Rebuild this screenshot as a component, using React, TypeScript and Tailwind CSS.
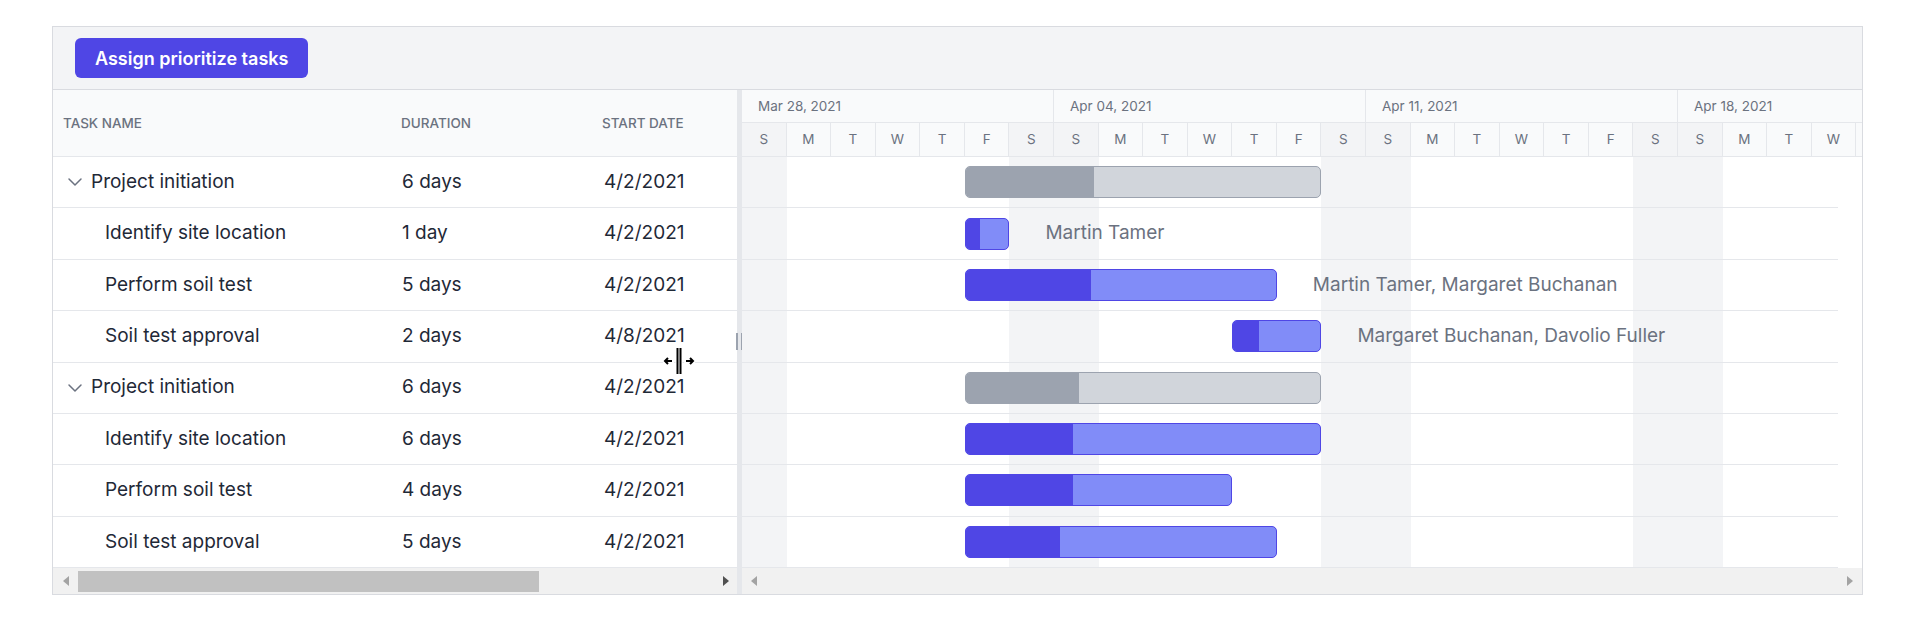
import type { FC, ReactElement } from "react";
import { ChevronDown } from "lucide-react";

const DAY_W = 312 / 7;

interface Task {
  name: string;
  duration: string;
  start: string;
  parent?: boolean;
  startDay: number;
  days: number;
  progress: number;
  label?: string;
}

const tasks: Task[] = [
  { name: "Project initiation", duration: "6 days", start: "4/2/2021", parent: true, startDay: 5, days: 8, progress: 128 },
  { name: "Identify site location", duration: "1 day", start: "4/2/2021", startDay: 5, days: 1, progress: 14, label: "Martin Tamer" },
  { name: "Perform soil test", duration: "5 days", start: "4/2/2021", startDay: 5, days: 7, progress: 125, label: "Martin Tamer, Margaret Buchanan" },
  { name: "Soil test approval", duration: "2 days", start: "4/8/2021", startDay: 11, days: 2, progress: 26, label: "Margaret Buchanan, Davolio Fuller" },
  { name: "Project initiation", duration: "6 days", start: "4/2/2021", parent: true, startDay: 5, days: 8, progress: 113 },
  { name: "Identify site location", duration: "6 days", start: "4/2/2021", startDay: 5, days: 8, progress: 107 },
  { name: "Perform soil test", duration: "4 days", start: "4/2/2021", startDay: 5, days: 6, progress: 107 },
  { name: "Soil test approval", duration: "5 days", start: "4/2/2021", startDay: 5, days: 7, progress: 94 },
];

const weeks = ["Mar 28, 2021", "Apr 04, 2021", "Apr 11, 2021", "Apr 18, 2021"];
const dayLetters = ["S", "M", "T", "W", "T", "F", "S"];

const Arrow: FC<{ dir: "left" | "right"; color: string }> = ({ dir, color }): ReactElement => (
  <svg width="6" height="10" viewBox="0 0 6 10">
    {dir === "left" ? <path d="M6 0 L0 5 L6 10 Z" fill={color} /> : <path d="M0 0 L6 5 L0 10 Z" fill={color} />}
  </svg>
);

const ResizeCursor: FC = (): ReactElement => (
  <svg width="34" height="30" viewBox="0 0 34 30" className="absolute left-[662px] top-[346px] pointer-events-none">
    <g fill="none" stroke="#fff" strokeWidth="4" strokeLinecap="square">
      <path d="M10 15 H3 M6 12 L3 15 L6 18" />
      <path d="M24 15 H31 M28 12 L31 15 L28 18" />
      <path d="M15.5 2 V28 M18.5 2 V28" />
    </g>
    <g fill="none" stroke="#000" strokeWidth="2">
      <path d="M10 15 H3 M6 12 L3 15 L6 18" />
      <path d="M24 15 H31 M28 12 L31 15 L28 18" />
      <path d="M15.5 2 V28 M18.5 2 V28" />
    </g>
  </svg>
);

const App: FC = (): ReactElement => {
  return (
    <div className="relative min-h-screen bg-white pt-[26px] pl-[52px] font-['Inter',sans-serif]">
      <div className="w-[1811px] h-[569px] border border-[#d9dbe0] flex flex-col">
        {/* toolbar */}
        <div className="h-[63px] shrink-0 bg-[#f3f4f6] border-b border-[#d9dbe0] pl-[22px] flex items-center">
          <button className="h-10 px-[20px] rounded-md bg-[#4f46e5] text-white text-[18px] font-semibold">
            Assign prioritize tasks
          </button>
        </div>

        <div className="flex flex-1 min-h-0">
          {/* grid */}
          <div className="w-[684px] shrink-0 flex flex-col">
            <div className="h-[67px] shrink-0 bg-[#f9fafb] border-b border-[#e5e7eb] flex items-center text-[13.5px] font-medium text-[#6b7280] uppercase">
              <div className="w-[338px] pl-[10px]">Task Name</div>
              <div className="w-[201px] pl-[10px]">Duration</div>
              <div className="pl-[10px]">Start Date</div>
            </div>
            {tasks.map((t, i) => (
              <div key={i} className="h-[51.375px] shrink-0 border-b border-[#e5e7eb] flex items-center text-[19px] text-[#1f2937]">
                <div className="w-[338px] flex items-center">
                  {t.parent ? (
                    <div className="flex items-center pl-[10px]">
                      <ChevronDown size={24} strokeWidth={1.5} className="text-[#6b7280]" />
                      <span className="ml-[4px]">{t.name}</span>
                    </div>
                  ) : (
                    <span className="pl-[52px]">{t.name}</span>
                  )}
                </div>
                <div className="w-[201px] pl-[11px]">{t.duration}</div>
                <div className="pl-[12px]">{t.start}</div>
              </div>
            ))}
            <div className="h-[26px] shrink-0 bg-[#f1f1f1] flex items-center">
              <div className="w-[25px] flex justify-center">
                <Arrow dir="left" color="#a3a3a3" />
              </div>
              <div className="w-[461px] h-[21px] bg-[#c1c1c1]" />
              <div className="flex-1 flex justify-end pr-[8px]">
                <Arrow dir="right" color="#505050" />
              </div>
            </div>
          </div>

          {/* splitter */}
          <div className="relative w-[5px] shrink-0 bg-[#e5e7eb]">
            <div className="absolute left-[-1px] top-[243px] flex gap-[3px]">
              <div className="w-[2px] h-[17px] bg-[#9ca3af]" />
              <div className="w-[2px] h-[17px] bg-[#9ca3af]" />
            </div>
          </div>

          {/* chart */}
          <div className="w-[1120px] shrink-0 flex flex-col overflow-hidden">
            <div className="h-[33px] shrink-0 flex border-b border-[#e5e7eb] bg-[#f9fafb] text-[13.5px] text-[#6b7280]">
              {weeks.map((w) => (
                <div key={w} className="w-[312px] shrink-0 border-r border-[#e5e7eb] pl-[16px] flex items-center">
                  {w}
                </div>
              ))}
            </div>
            <div className="h-[34px] shrink-0 flex border-b border-[#e5e7eb] text-[13.5px] text-[#6b7280]">
              {weeks.map((w) => (
                <div key={w} className="w-[312px] shrink-0 flex">
                  {dayLetters.map((d, j) => (
                    <div
                      key={j}
                      className={`flex-1 border-r border-[#e5e7eb] flex items-center justify-center ${
                        j === 0 || j === 6 ? "bg-[#f3f4f6]" : "bg-[#f9fafb]"
                      }`}
                    >
                      {d}
                    </div>
                  ))}
                </div>
              ))}
            </div>

            <div className="flex h-[411px] shrink-0">
              <div className="relative w-[1096px] overflow-hidden">
                <div className="absolute inset-y-0 left-0 flex">
                  {weeks.map((w) => (
                    <div key={w} className="w-[312px] shrink-0 flex">
                      {dayLetters.map((_, j) => (
                        <div key={j} className={`flex-1 ${j === 0 || j === 6 ? "bg-[#f3f4f6]" : ""}`} />
                      ))}
                    </div>
                  ))}
                </div>
                <div className="relative flex flex-col">
                  {tasks.map((t, i) => (
                    <div key={i} className="h-[51.375px] shrink-0 border-b border-[#e5e7eb] flex items-center">
                      <div className="shrink-0" style={{ width: t.startDay * DAY_W }} />
                      <div
                        className={`h-8 shrink-0 rounded-[5px] border overflow-hidden flex ${
                          t.parent ? "border-[#9ca3af] bg-[#d1d5db]" : "border-[#4f46e5] bg-[#818cf8]"
                        }`}
                        style={{ width: t.days * DAY_W }}
                      >
                        <div
                          className={`h-full ${t.parent ? "bg-[#9ca3af]" : "bg-[#4f46e5]"}`}
                          style={{ width: t.progress }}
                        />
                      </div>
                      {t.label && (
                        <span className="ml-[36px] whitespace-nowrap text-[19px] text-[#6b7280]">{t.label}</span>
                      )}
                    </div>
                  ))}
                </div>
              </div>
              <div className="w-[24px] bg-white" />
            </div>

            <div className="h-[26px] shrink-0 bg-[#f1f1f1] flex items-center justify-between px-[9px]">
              <Arrow dir="left" color="#a3a3a3" />
              <Arrow dir="right" color="#a3a3a3" />
            </div>
          </div>
        </div>
      </div>
      <ResizeCursor />
    </div>
  );
};

export default App;
